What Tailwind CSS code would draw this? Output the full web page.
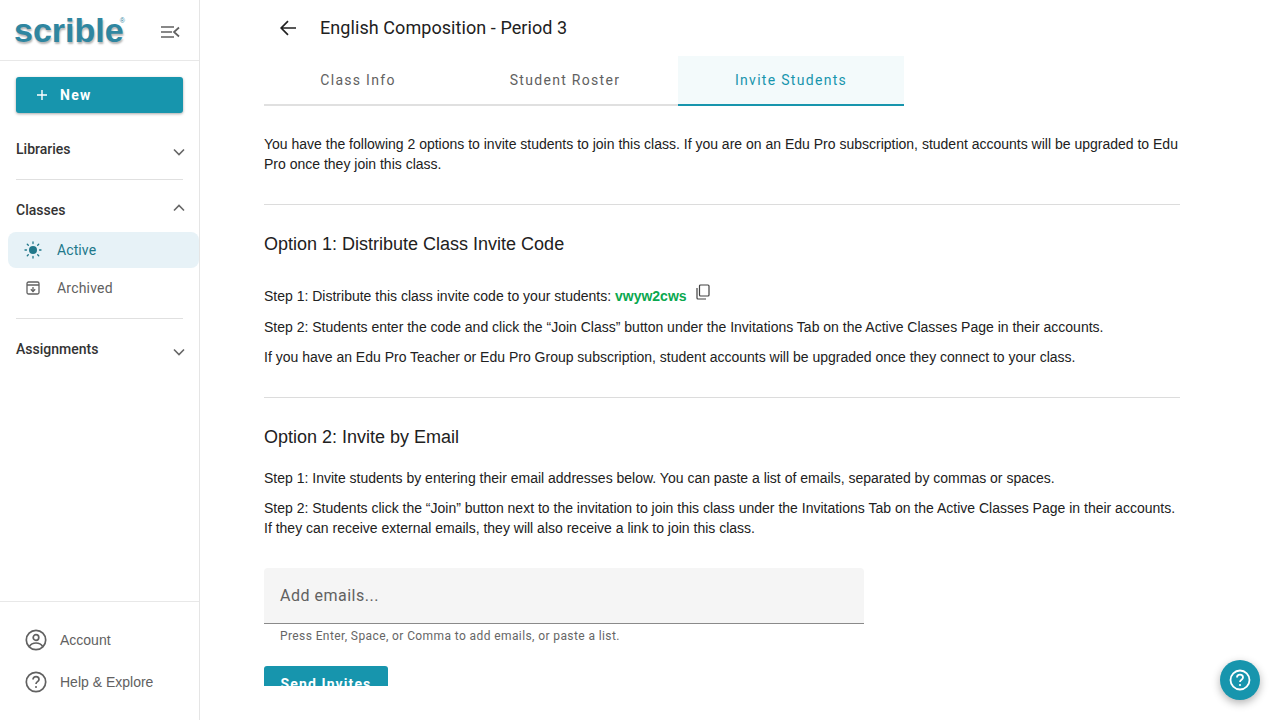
<!DOCTYPE html>
<html lang="en">
<head>
  <meta charset="UTF-8" />
  <title>English Composition - Period 3</title>
  <script src="https://cdn.jsdelivr.net/npm/@tailwindcss/browser@4"></script>
</head>
<body class="bg-white h-[720px] w-[1280px] overflow-hidden flex font-['Roboto',sans-serif] relative">
  <!-- Sidebar -->
  <aside class="w-[200px] h-[720px] shrink-0 border-r border-[#e5e5e5] flex flex-col">
    <div class="h-[61px] border-b border-[#e8e8e8] flex items-center justify-between pl-[14px] pr-[19px] shrink-0">
      <div class="flex items-start font-['Liberation_Sans',sans-serif] font-bold text-[34px] leading-[40px] tracking-[0px] text-[#2f86a0] [text-shadow:1px_2px_2px_#b5b5b5]">scrible<span class="-ml-[4px] mt-[7px] text-[7px] leading-[8px] font-normal [text-shadow:none]">®</span></div>
      <svg class="w-[20px] h-[14px] mt-[3px]" viewBox="0 0 20 14" fill="none" stroke="#616161" stroke-width="1.700"><path d="M1 2h13M1 7h11M1 12h13M19 2.500l-5 4.500 5 4.500"/></svg>
    </div>
    <div class="px-4 pt-4">
      <button class="w-full h-9 rounded-[3px] bg-[#1795ad] shadow-[0_1px_3px_rgba(0,0,0,0.35)] flex items-center pl-[20px] text-white text-sm font-bold tracking-[1.25px]">
        <svg class="w-3 h-3 mr-3" viewBox="0 0 12 12" fill="none" stroke="white" stroke-width="1.400"><path d="M6 1v10M1 6h10"/></svg>
        New
      </button>
    </div>
    <div class="pl-4 pr-[14px] mt-[26px] flex justify-between h-5 items-center text-sm font-medium text-[#333]">
      <span>Libraries</span>
      <svg class="w-3 h-2 mt-[6px]" viewBox="0 0 12 8" fill="none" stroke="#666" stroke-width="1.600"><path d="M1 1.500l5 5 5-5"/></svg>
    </div>
    <div class="mx-4 mt-[20px] border-t border-[#e0e0e0]"></div>
    <div class="pl-4 pr-[14px] mt-[20px] flex justify-between h-5 items-center text-sm font-medium text-[#333]">
      <span>Classes</span>
      <svg class="w-3 h-2 -mt-1" viewBox="0 0 12 8" fill="none" stroke="#666" stroke-width="1.600"><path d="M1 6.500l5-5 5 5"/></svg>
    </div>
    <div class="ml-2 mt-3 h-9 rounded-lg bg-[#e7f2f7] flex items-center pl-4 text-sm text-[#21788a] tracking-[0.1px]">
      <svg class="w-[18px] h-[18px] mr-[15px]" viewBox="0 0 18 18" fill="#21788a" stroke="#21788a" stroke-width="1.300" stroke-linecap="round"><circle cx="9" cy="9" r="4" stroke="none"/><path d="M9 1v1.500M9 15.500V17M1 9h1.500M15.500 9H17M3.300 3.300l1 1M13.700 13.700l1 1M3.300 14.700l1-1M13.700 4.300l1-1"/></svg>
      Active
    </div>
    <div class="ml-2 mt-[2px] h-9 flex items-center pl-4 text-sm text-[#616161] tracking-[0.2px]">
      <svg class="w-[18px] h-[18px] mr-[15px]" viewBox="0 0 18 18" fill="none" stroke="#616161" stroke-width="1.300"><rect x="3" y="3" width="12" height="12" rx="1.500"/><path d="M3 6h12M9 8v4.500"/><path d="M6.800 10.300L9 12.500l2.200-2.200"/></svg>
      Archived
    </div>
    <div class="mx-4 mt-[12px] border-t border-[#e0e0e0]"></div>
    <div class="pl-4 pr-[14px] mt-[20px] flex justify-between h-5 items-center text-sm font-medium text-[#333]">
      <span>Assignments</span>
      <svg class="w-3 h-2 mt-[6px]" viewBox="0 0 12 8" fill="none" stroke="#666" stroke-width="1.600"><path d="M1 1.500l5 5 5-5"/></svg>
    </div>
    <div class="mt-auto border-t border-[#e8e8e8] pt-[17px] pb-[17px] pl-[25px] text-sm font-['Liberation_Sans',sans-serif] text-[#616161]">
      <div class="h-[42px] flex items-center">
        <svg class="w-[22px] h-[22px] mr-[13px]" viewBox="0 0 22 22" fill="none" stroke="#616161" stroke-width="1.700"><circle cx="11" cy="11" r="9.700"/><circle cx="11" cy="8.500" r="2.800"/><path d="M4.300 17.500c1.500-2.500 4-3.500 6.700-3.500s5.200 1 6.700 3.500"/></svg>
        Account
      </div>
      <div class="h-[42px] flex items-center">
        <svg class="w-[22px] h-[22px] mr-[13px]" viewBox="0 0 22 22" fill="none" stroke="#616161" stroke-width="1.700"><circle cx="11" cy="11" r="9.700"/><path d="M8 8.500c0-1.700 1.300-2.800 3-2.800s3 1.100 3 2.700c0 2.300-3 2.300-3 4.600"/><circle cx="11" cy="16" r="1" fill="#616161" stroke="none"/></svg>
        Help &amp; Explore
      </div>
    </div>
  </aside>

  <!-- Main -->
  <main class="h-[686px] w-[1080px] overflow-hidden pl-16">
    <div class="w-[916px]">
      <div class="h-[56px] flex items-center pb-[1px] text-[18px] tracking-[0.07px] text-[#212121]">
        <svg class="w-4 h-4 ml-4 mr-6" viewBox="0 0 16 16" fill="none" stroke="#212121" stroke-width="1.700"><path d="M16 8H1.500M8 1.200L1.200 8 8 14.800"/></svg>
        English Composition - Period 3
      </div>
      <div class="w-[640px] h-[50px] flex border-b-2 border-[#e0e0e0] text-sm tracking-[1.3px] text-[#616161]">
        <div class="w-[188px] h-[50px] flex items-center justify-center border-b-2 border-transparent">Class Info</div>
        <div class="w-[226px] h-[50px] flex items-center justify-center border-b-2 border-transparent">Student Roster</div>
        <div class="w-[226px] h-[50px] flex items-center justify-center bg-[#f3fafb] text-[#1795ad] border-b-2 border-[#1795ad]">Invite Students</div>
      </div>
      <div class="font-['Liberation_Sans',sans-serif] text-sm leading-5 text-[#212121]">
        <p class="mt-[28px]">You have the following 2 options to invite students to join this class. If you are on an Edu Pro subscription, student accounts will be upgraded to Edu Pro once they join this class.</p>
        <div class="mt-[30px] border-t border-[#dcdcdc]"></div>
        <h2 class="mt-[27px] text-[18px] leading-6 font-normal">Option 1: Distribute Class Invite Code</h2>
        <p class="mt-[30px] flex items-center h-5">Step 1: Distribute this class invite code to your students:&nbsp;<b class="text-[#0aa84f]">vwyw2cws</b>
          <svg class="w-[16px] h-[16px] ml-[8px] -mt-[9px]" viewBox="0 0 16 16" fill="none" stroke="#424242" stroke-width="1.200"><rect x="4.500" y="1" width="9.500" height="11" rx="1"/><path d="M2 4v10a1 1 0 0 0 1 1h8"/></svg>
        </p>
        <p class="mt-[11px]">Step 2: Students enter the code and click the “Join Class” button under the Invitations Tab on the Active Classes Page in their accounts.</p>
        <p class="mt-[10px]">If you have an Edu Pro Teacher or Edu Pro Group subscription, student accounts will be upgraded once they connect to your class.</p>
        <div class="mt-[30px] border-t border-[#dcdcdc]"></div>
        <h2 class="mt-[27px] text-[18px] leading-6 font-normal">Option 2: Invite by Email</h2>
        <p class="mt-[19px]">Step 1: Invite students by entering their email addresses below. You can paste a list of emails, separated by commas or spaces.</p>
        <p class="mt-[10px]">Step 2: Students click the “Join” button next to the invitation to join this class under the Invitations Tab on the Active Classes Page in their accounts. If they can receive external emails, they will also receive a link to join this class.</p>
      </div>
      <div class="mt-[30px] w-[600px] h-[56px] rounded-t bg-[#f5f5f5] border-b border-[#8a8a8a] flex items-center pl-4 text-base tracking-[0.5px] text-[#616161]">Add emails...</div>
      <div class="mt-[4px] pl-4 text-xs leading-4 tracking-[0.4px] text-[#666]">Press Enter, Space, or Comma to add emails, or paste a list.</div>
      <button class="mt-[22px] w-[124px] h-9 rounded-[3px] bg-[#1795ad] text-white text-sm font-bold tracking-[1.1px]">Send Invites</button>
    </div>
  </main>

  <!-- Help button -->
  <button class="absolute left-[1220px] top-[660px] w-10 h-10 rounded-full bg-[#1795ad] shadow-[0_3px_8px_rgba(0,0,0,0.3)] flex items-center justify-center">
    <svg class="w-[22px] h-[22px]" viewBox="0 0 22 22" fill="none" stroke="white" stroke-width="1.800"><circle cx="11" cy="11" r="9.500"/><path d="M8 8.500c0-1.700 1.300-2.800 3-2.800s3 1.100 3 2.700c0 2.300-3 2.300-3 4.600"/><circle cx="11" cy="16" r="1.100" fill="white" stroke="none"/></svg>
  </button>
</body>
</html>
